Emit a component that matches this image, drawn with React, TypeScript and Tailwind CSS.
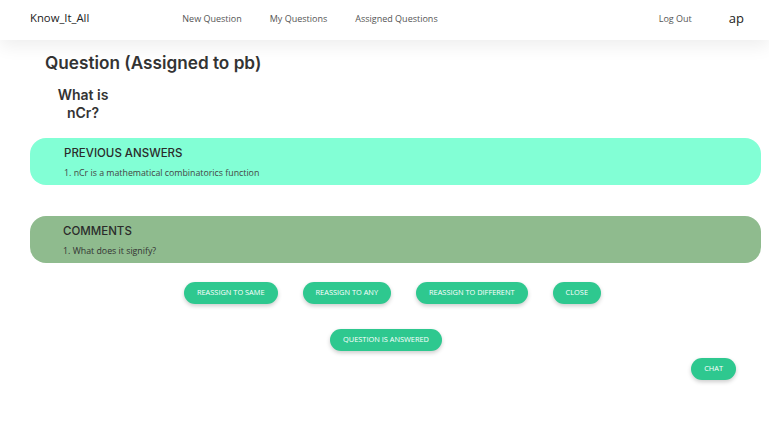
import React from "react";

const HEAD = "font-['Inter','Open_Sans',sans-serif]";
const BODY = "font-['Open_Sans','Liberation_Sans',sans-serif]";

function Pill({ label }: { label: string }) {
  return (
    <button
      className={`${BODY} h-[22px] rounded-full bg-[#2ec88f] px-[13px] text-[7.4px] uppercase leading-none text-white shadow-[0_2px_4px_rgba(0,0,0,0.2)]`}
    >
      {label}
    </button>
  );
}

export default function App() {
  return (
    <div className="min-h-[428px] w-full bg-white text-[#333]">
      <nav className="relative z-10 flex h-10 items-center bg-white pb-[3px] pl-[30px] pr-[25px] shadow-[0_6px_18px_rgba(0,0,0,0.07)]">
        <span className={`${BODY} text-[11.3px] text-[#222]`}>Know_It_All</span>
        <div className={`${BODY} ml-[93px] flex gap-[28px] text-[9px] text-[#555]`}>
          <span>New Question</span>
          <span>My Questions</span>
          <span>Assigned Questions</span>
        </div>
        <span className={`${BODY} ml-auto text-[9px] text-[#555]`}>Log Out</span>
        <span className={`${BODY} ml-[37px] text-[13px] text-[#222]`}>ap</span>
      </nav>

      <main className="pt-[11px]">
        <h1 className={`${HEAD} ml-[45px] text-[17.2px] font-semibold leading-[24px] text-[#333]`}>
          Question (Assigned to pb)
        </h1>
        <p className={`${HEAD} ml-[57px] mt-[11px] w-[52px] text-center text-[14px] font-semibold leading-[18px] text-[#333]`}>
          What is nCr?
        </p>

        <section className="ml-[30px] mr-[8px] mt-[16px] rounded-[16px] bg-[#82ffd5] pb-[5px] pl-[34px] pt-[7px]">
          <h2 className={`${HEAD} text-[11.5px] font-medium leading-[16px] text-[#2b2b2b]`}>PREVIOUS ANSWERS</h2>
          <p className={`${BODY} mt-[6px] text-[8.8px] leading-[13px] text-[#444]`}>
            1. nCr is a mathematical combinatorics function
          </p>
        </section>

        <section className="ml-[30px] mr-[8px] mt-[31px] rounded-[16px] bg-[#8fbb8e] pb-[5px] pl-[33px] pt-[7px]">
          <h2 className={`${HEAD} text-[11.5px] font-medium leading-[16px] text-[#2b2b2b]`}>COMMENTS</h2>
          <p className={`${BODY} mt-[6px] text-[8.8px] leading-[13px] text-[#333]`}>
            1. What does it signify?
          </p>
        </section>

        <div className="mt-[19px] flex justify-center gap-[25px] pl-[16px]">
          <Pill label="Reassign to same" />
          <Pill label="Reassign to any" />
          <Pill label="Reassign to different" />
          <Pill label="Close" />
        </div>
        <div className="mt-[25px] flex justify-center pl-[3px]">
          <Pill label="Question is answered" />
        </div>
        <div className="mt-[7px] flex justify-end pr-[33px]">
          <Pill label="Chat" />
        </div>
      </main>
    </div>
  );
}
